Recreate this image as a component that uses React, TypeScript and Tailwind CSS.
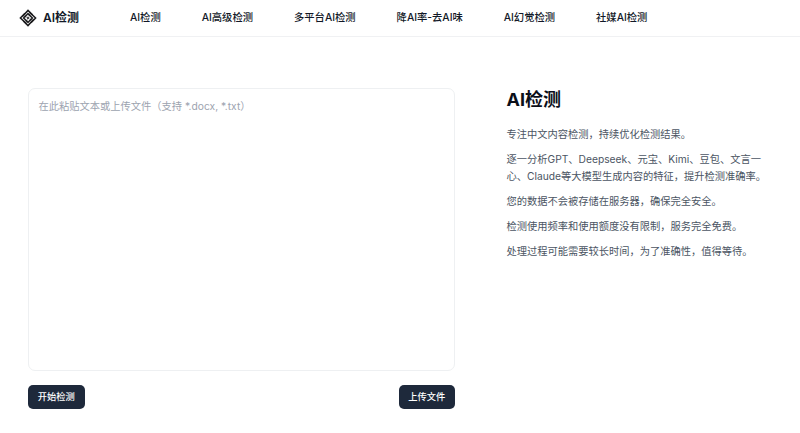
import React from "react";

const font = { fontFamily: "Inter, 'Noto Sans CJK SC', sans-serif" };
const navItems = ["AI检测", "AI高级检测", "多平台AI检测", "降AI率-去AI味", "AI幻觉检测", "社媒AI检测"];

function Logo() {
  return (
    <svg width="18" height="18" viewBox="0 0 18 18" fill="none" stroke="#1c1c1e" strokeWidth="1.5">
      <path d="M3.4 7.4 9 1.4 13.6 6" />
      <path d="M10.6 3.4 16.6 9 12 13.6" />
      <path d="M14.6 10.6 9 16.6 4.4 12" />
      <path d="M7.4 14.6 1.4 9 6 4.4" />
      <path d="M5.8 8 9 4.6 11.2 6.8" />
      <path d="M10 5.8 13.4 9 11.2 11.2" />
      <path d="M12.2 10 9 13.4 6.8 11.2" />
      <path d="M8 12.2 4.6 9 6.8 6.8" />
      <path d="M7.8 9 9 7.8 10.2 9 9 10.2Z" strokeWidth="1" />
    </svg>
  );
}

export default function App() {
  return (
    <div className="h-[433px] w-[800px] overflow-hidden bg-white" style={font}>
      <header className="flex h-[37px] items-center border-b border-[#f0f1f3] pl-[19px]">
        <div className="flex w-[111px] items-center gap-[6px]">
          <Logo />
          <span className="text-[12px] font-semibold text-[#111827]">AI检测</span>
        </div>
        <nav className="flex gap-[41px]">
          {navItems.map((item) => (
            <a key={item} className="text-[10.3px] font-medium text-[#111827]">
              {item}
            </a>
          ))}
        </nav>
      </header>

      <main className="flex pl-[28px] pt-[51px]">
        <div className="w-[427px]">
          <div className="h-[283px] rounded-[7px] border border-[#eef0f2] px-[9.5px] py-[9px] text-[10.25px] leading-[16px] text-[#9ca3af]">
            在此粘贴文本或上传文件（支持 *.docx, *.txt）
          </div>
          <div className="mt-[14px] flex justify-between">
            <button className="h-[24px] w-[56.5px] rounded-[5px] bg-[#1e293b] text-[9.25px] font-medium text-white">开始检测</button>
            <button className="h-[24px] w-[56.5px] rounded-[5px] bg-[#1e293b] text-[9.25px] font-medium text-white">上传文件</button>
          </div>
        </div>

        <aside className="ml-[51.5px] w-[262px]">
          <h1 className="text-[18px] leading-[24px] font-bold text-[#0b0f19]">AI检测</h1>
          <div className="mt-[14px] flex flex-col gap-[8px] text-[10.25px] leading-[17px] text-[#4b5563]">
            <p>专注中文内容检测，持续优化检测结果。</p>
            <p>逐一分析GPT、Deepseek、元宝、Kimi、豆包、文言一心、Claude等大模型生成内容的特征，提升检测准确率。</p>
            <p>您的数据不会被存储在服务器，确保完全安全。</p>
            <p>检测使用频率和使用额度没有限制，服务完全免费。</p>
            <p>处理过程可能需要较长时间，为了准确性，值得等待。</p>
          </div>
        </aside>
      </main>
    </div>
  );
}
